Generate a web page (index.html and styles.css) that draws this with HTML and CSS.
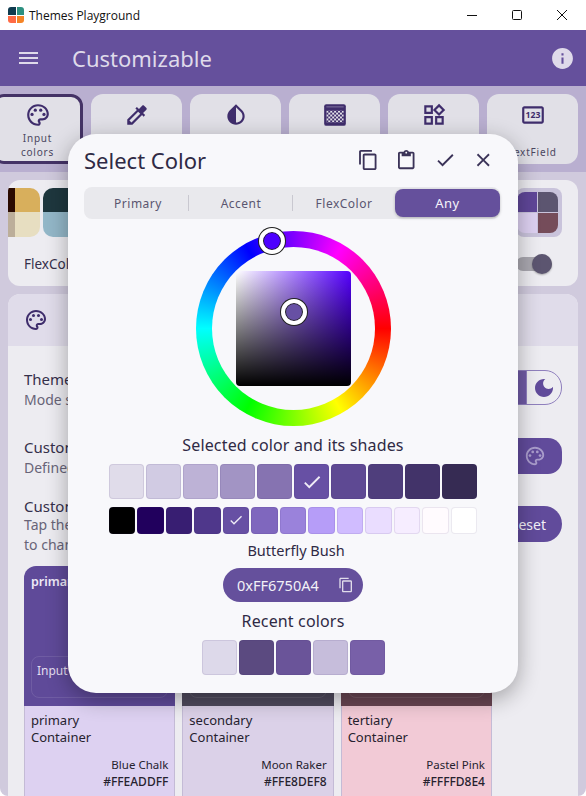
FILE: index.html
```html
<!DOCTYPE html>
<html lang="en">
<head>
    <meta charset="UTF-8">
    <meta name="viewport" content="width=device-width, initial-scale=1.0">
    <title>Themes Playground</title>
    <link rel="stylesheet" href="styles.css">
</head>
<body>
    <svg class="icon-defs" width="0" height="0">
        <symbol id="i-palette" viewBox="0 0 24 24">
            <path d="M12 22C6.49 22 2 17.51 2 12S6.49 2 12 2s10 4.04 10 9c0 3.31-2.69 6-6 6h-1.77c-.28 0-.5.22-.5.5 0 .12.05.23.13.33.41.47.64 1.06.64 1.67 0 1.38-1.12 2.5-2.5 2.5zm0-18c-4.41 0-8 3.59-8 8s3.59 8 8 8c.28 0 .5-.22.5-.5 0-.16-.08-.28-.14-.35-.41-.46-.63-1.05-.63-1.65 0-1.38 1.12-2.5 2.5-2.5H16c2.21 0 4-1.79 4-4 0-3.86-3.59-7-8-7z"/>
            <circle cx="6.5" cy="11.5" r="1.5"/><circle cx="9.5" cy="7.5" r="1.5"/><circle cx="14.5" cy="7.5" r="1.5"/><circle cx="17.5" cy="11.5" r="1.5"/>
        </symbol>
        <symbol id="i-copy" viewBox="0 0 24 24">
            <path d="M16 1H4c-1.1 0-2 .9-2 2v14h2V3h12V1zm3 4H8c-1.1 0-2 .9-2 2v14c0 1.1.9 2 2 2h11c1.1 0 2-.9 2-2V7c0-1.1-.9-2-2-2zm0 16H8V7h11v14z"/>
        </symbol>
        <symbol id="i-check" viewBox="0 0 24 24">
            <path d="M9 16.17L4.83 12l-1.42 1.41L9 19 21 7l-1.41-1.41z"/>
        </symbol>
    </svg>

    <div class="page">
        <div class="titlebar">
            <span class="app-logo"><i class="q1"></i><i class="q2"></i><i class="q3"></i><i class="q4"></i></span>
            <span class="app-name">Themes Playground</span>
            <div class="win-buttons">
                <svg width="12" height="12" viewBox="0 0 12 12"><path d="M1 6.5h10" stroke="#111" fill="none"/></svg>
                <svg width="12" height="12" viewBox="0 0 12 12"><rect x="1.5" y="1.5" width="9" height="9" rx="1" stroke="#111" fill="none"/></svg>
                <svg width="12" height="12" viewBox="0 0 12 12"><path d="M1 1l10 10M11 1L1 11" stroke="#111" fill="none"/></svg>
            </div>
        </div>

        <header class="appbar">
            <svg class="menu-icon" width="19" height="12" viewBox="0 0 19 12"><path d="M0 0h19v2H0zM0 5h19v2H0zM0 10h19v2H0z"/></svg>
            <h1>Customizable</h1>
            <svg class="info-icon" width="25" height="25" viewBox="0 0 24 24"><path d="M12 2C6.48 2 2 6.48 2 12s4.48 10 10 10 10-4.48 10-10S17.52 2 12 2zm1 15h-2v-6h2v6zm0-8h-2V7h2v2z"/></svg>
        </header>

        <nav class="tiles">
            <div class="tile tile-active">
                <svg class="tile-icon"><use href="#i-palette"/></svg>
                <span>Input<br>colors</span>
            </div>
            <div class="tile">
                <svg class="tile-icon" viewBox="0 0 24 24"><path d="M20.71 5.63l-2.34-2.34c-.39-.39-1.02-.39-1.41 0l-3.12 3.12-1.93-1.91-1.41 1.41 1.42 1.42L3 16.25V21h4.75l8.92-8.92 1.42 1.42 1.41-1.41-1.92-1.92 3.12-3.12c.4-.4.4-1.03.01-1.42zM6.92 19L5 17.08l8.06-8.06 1.92 1.92L6.92 19z"/></svg>
            </div>
            <div class="tile">
                <svg class="tile-icon" viewBox="0 0 24 24"><path transform="matrix(-1 0 0 1 24 0)" d="M12 4.81V19c-3.31 0-6-2.63-6-5.87 0-1.56.62-3.03 1.75-4.14L12 4.81M6.35 7.56C4.9 8.99 4 10.96 4 13.13 4 17.48 7.58 21 12 21s8-3.52 8-7.87c0-2.17-.9-4.14-2.35-5.57L12 2 6.35 7.56z"/></svg>
            </div>
            <div class="tile">
                <svg class="tile-icon" viewBox="0 0 24 24">
                    <defs><pattern id="dither" x="4" y="8" width="3.6" height="3.6" patternUnits="userSpaceOnUse"><rect width="3.6" height="3.6" fill="#3f2d6c"/><rect width="1.8" height="1.8" fill="#e1e0e7"/><rect x="1.8" y="1.8" width="1.8" height="1.8" fill="#e1e0e7"/></pattern></defs>
                    <rect x="2" y="2" width="20" height="20" rx="2"/>
                    <rect x="4" y="4" width="16" height="1" fill="#7b6d9c"/>
                    <rect x="4" y="8" width="16" height="10.8" fill="url(#dither)"/>
                </svg>
            </div>
            <div class="tile">
                <svg class="tile-icon" viewBox="0 0 24 24"><path d="M16.66 4.52l2.83 2.83-2.83 2.83-2.83-2.83 2.83-2.83M9 5v4H5V5h4m10 10v4h-4v-4h4M9 15v4H5v-4h4m7.66-13.31L11 7.34 16.66 13l5.66-5.66-5.66-5.65zM11 3H3v8h8V3zm10 10h-8v8h8v-8zm-10 0H3v8h8v-8z"/></svg>
            </div>
            <div class="tile">
                <svg class="tile-icon" viewBox="0 0 24 24">
                    <path d="M20 4H4c-1.1 0-2 .9-2 2v12c0 1.1.9 2 2 2h16c1.1 0 2-.9 2-2V6c0-1.1-.9-2-2-2zm0 14H4V6h16v12z"/>
                    <text x="12" y="15" class="pin-text">123</text>
                </svg>
                <span>TextField</span>
            </div>
        </nav>

        <main class="content">
            <section class="card schemes">
                <div class="swatch-row">
                    <div class="scheme scheme-gold"><i></i><i></i><i></i><i></i></div>
                    <div class="scheme scheme-teal"><i></i><i></i></div>
                    <div class="scheme-current"><div class="quad"><i></i><i></i><i></i><i></i></div></div>
                </div>
                <div class="scheme-foot">
                    <span>FlexColor scheme</span>
                    <span class="switch"><i></i></span>
                </div>
            </section>

            <section class="card panel">
                <div class="panel-head">
                    <svg class="panel-icon"><use href="#i-palette"/></svg>
                </div>
                <div class="panel-body">
                    <div class="row row-mode">
                        <div class="row-text">
                            <div class="row-title">Theme mode</div>
                            <div class="row-sub">Mode system</div>
                        </div>
                        <div class="mode-toggle">
                            <span class="mode-seg"></span>
                            <span class="mode-seg mode-on"></span>
                            <span class="mode-seg">
                                <svg width="24" height="24" viewBox="0 0 24 24"><path d="M12 3c-4.97 0-9 4.03-9 9s4.03 9 9 9 9-4.03 9-9c0-.46-.04-.92-.1-1.36-.98 1.37-2.58 2.26-4.4 2.26-2.98 0-5.4-2.42-5.4-5.4 0-1.81.89-3.42 2.26-4.4-.44-.06-.9-.1-1.36-.1z"/></svg>
                            </span>
                        </div>
                    </div>
                    <div class="row row-custom">
                        <div class="row-text">
                            <div class="row-title">Custom colors</div>
                            <div class="row-sub">Defined</div>
                        </div>
                        <div class="btn-palette">
                            <svg width="22" height="22"><use href="#i-palette"/></svg>
                        </div>
                    </div>
                    <div class="row row-reset">
                        <div class="row-text">
                            <div class="row-title">Custom input</div>
                            <div class="row-sub">Tap the colors<br>to change them</div>
                        </div>
                        <div class="btn-reset">Reset</div>
                    </div>

                    <div class="color-cards">
                        <div class="color-card cc-primary">
                            <div class="cc-top">
                                <div class="cc-name">primary</div>
                                <div class="cc-input">Input</div>
                            </div>
                            <div class="cc-bottom">
                                <div class="cc-label">primary<br>Container</div>
                                <div class="cc-code">Blue Chalk<br><b>#FFEADDFF</b></div>
                            </div>
                        </div>
                        <div class="color-card cc-secondary">
                            <div class="cc-top">
                                <div class="cc-input"></div>
                            </div>
                            <div class="cc-bottom">
                                <div class="cc-label">secondary<br>Container</div>
                                <div class="cc-code">Moon Raker<br><b>#FFE8DEF8</b></div>
                            </div>
                        </div>
                        <div class="color-card cc-tertiary">
                            <div class="cc-top">
                                <div class="cc-input"></div>
                            </div>
                            <div class="cc-bottom">
                                <div class="cc-label">tertiary<br>Container</div>
                                <div class="cc-code">Pastel Pink<br><b>#FFFFD8E4</b></div>
                            </div>
                        </div>
                    </div>
                </div>
            </section>
        </main>
    </div>

    <div class="dialog">
        <div class="dialog-head">
            <h2>Select Color</h2>
            <div class="dialog-actions">
                <svg width="24" height="24"><use href="#i-copy"/></svg>
                <svg width="24" height="24" viewBox="0 0 24 24"><path d="M19 3h-4.18C14.4 1.84 13.3 1 12 1c-1.3 0-2.4.84-2.82 2H5c-1.1 0-2 .9-2 2v15c0 1.1.9 2 2 2h14c1.1 0 2-.9 2-2V5c0-1.1-.9-2-2-2zm-7 0c.55 0 1 .45 1 1s-.45 1-1 1-1-.45-1-1 .45-1 1-1zm7 17H5V5h2v3h10V5h2v15z"/></svg>
                <svg width="24" height="24"><use href="#i-check"/></svg>
                <svg width="24" height="24" viewBox="0 0 24 24"><path d="M19 6.41L17.59 5 12 10.59 6.41 5 5 6.41 10.59 12 5 17.59 6.41 19 12 13.41 17.59 19 19 17.59 13.41 12z"/></svg>
            </div>
        </div>

        <div class="segments">
            <span class="seg seg-line">Primary</span>
            <span class="seg seg-line">Accent</span>
            <span class="seg">FlexColor</span>
            <span class="seg seg-on">Any</span>
        </div>

        <div class="wheel">
            <div class="wheel-hole"><div class="sv-box"></div></div>
            <span class="thumb thumb-hue"></span>
            <span class="thumb thumb-sv"></span>
        </div>

        <div class="caption">Selected color and its shades</div>
        <div class="shades">
            <span style="background:#e0dcea"></span>
            <span style="background:#d1cbe3"></span>
            <span style="background:#bdb2d6"></span>
            <span style="background:#a294c4"></span>
            <span style="background:#8673b1"></span>
            <span style="background:#6750a4"><svg width="22" height="22"><use href="#i-check"/></svg></span>
            <span style="background:#5e4993"></span>
            <span style="background:#4f3e7c"></span>
            <span style="background:#423369"></span>
            <span style="background:#362b53"></span>
        </div>
        <div class="tones">
            <span style="background:#000000"></span>
            <span style="background:#21005d"></span>
            <span style="background:#381e72"></span>
            <span style="background:#4f378b"></span>
            <span style="background:#6750a4"><svg width="16" height="16"><use href="#i-check"/></svg></span>
            <span style="background:#7f67be"></span>
            <span style="background:#9a82db"></span>
            <span style="background:#b69df8"></span>
            <span style="background:#d0bcff"></span>
            <span style="background:#eaddff"></span>
            <span style="background:#f6edff"></span>
            <span style="background:#fffbfe"></span>
            <span style="background:#ffffff"></span>
        </div>
        <div class="color-name">Butterfly Bush</div>
        <div class="hex-chip">
            <span>0xFF6750A4</span>
            <svg width="16" height="16"><use href="#i-copy"/></svg>
        </div>
        <div class="caption">Recent colors</div>
        <div class="shades">
            <span style="background:#ddd9ea"></span>
            <span style="background:#5b4a80"></span>
            <span style="background:#6a5499"></span>
            <span style="background:#c6bddb"></span>
            <span style="background:#7860a8"></span>
        </div>
    </div>
</body>
</html>
```

FILE: styles.css
```css
* {
    box-sizing: border-box;
}

body {
    margin: 0;
    width: 586px;
    height: 796px;
    overflow: hidden;
    position: relative;
    background-color: #fff;
    font-family: "Noto Sans", sans-serif;
    color: #2f2a45;
}

.icon-defs {
    position: absolute;
}

.page {
    height: 796px;
    display: flex;
    flex-direction: column;
    overflow: hidden;
    border-radius: 0 0 8px 8px;
}

/* window title */
.titlebar {
    height: 30px;
    flex: none;
    display: flex;
    align-items: center;
    padding-left: 8px;
    background-color: #fff;
}

.app-logo {
    width: 16px;
    height: 16px;
    display: grid;
    grid-template-columns: 1fr 1fr;
    grid-template-rows: 1fr 1fr;
    gap: 1px;
    border-radius: 3px;
    overflow: hidden;
}

.app-logo .q1 { background-color: #0f3b4f; }
.app-logo .q2 { background-color: #2d9080; }
.app-logo .q3 { background-color: #ff6a45; }
.app-logo .q4 { background-color: #f58426; }

.app-name {
    margin-left: 5px;
    font-family: "Open Sans", sans-serif;
    font-size: 12px;
    color: #111;
}

.win-buttons {
    margin-left: auto;
    display: flex;
    gap: 33px;
    padding-right: 18px;
}

/* app bar */
.appbar {
    height: 56px;
    flex: none;
    display: flex;
    align-items: center;
    padding: 0 11px 0 19px;
    background-color: #65509c;
}

.appbar h1 {
    margin: 0 0 0 34px;
    font-size: 22px;
    font-weight: 400;
    color: #dfdaea;
}

.menu-icon,
.info-icon {
    fill: #dfdaea;
}

.info-icon {
    margin-left: auto;
}

/* top tiles */
.tiles {
    height: 86px;
    flex: none;
    display: flex;
    gap: 8px;
    margin-left: -8px;
    padding-top: 8px;
    background-color: #b9afd0;
}

.tile {
    width: 91px;
    height: 70px;
    padding-top: 8px;
    flex: none;
    display: flex;
    flex-direction: column;
    align-items: center;
    background-color: #e1e0e7;
    border-radius: 12px;
    font-size: 10px;
    line-height: 14px;
    letter-spacing: 0.8px;
    text-align: center;
    color: #4b4760;
}

.tile span {
    margin-top: auto;
    padding-bottom: 5px;
}

.tile-active {
    border: 3px solid #443266;
    padding-top: 5px;
}

.tile-active span {
    padding-bottom: 2px;
}

.tile-icon {
    width: 26px;
    height: 26px;
    fill: #3f2d6c;
}

.pin-text {
    font-family: "Noto Sans", sans-serif;
    font-size: 8px;
    font-weight: 700;
    text-anchor: middle;
    letter-spacing: 0;
}

/* main area */
.content {
    flex: 1;
    min-height: 0;
    display: flex;
    flex-direction: column;
    gap: 8px;
    padding: 8px 8px 0;
    overflow: hidden;
    background-color: #d0cadd;
}

.card {
    background-color: #edecf1;
    border-radius: 12px;
    overflow: hidden;
}

.schemes {
    height: 106px;
    flex: none;
    padding-top: 8px;
}

.swatch-row {
    display: flex;
    height: 49px;
}

.scheme {
    display: grid;
    grid-template-rows: 24px 25px;
    overflow: hidden;
}

.scheme-gold {
    width: 32px;
    grid-template-columns: 7px 25px;
    border-radius: 0 10px 10px 0;
}

.scheme-gold i:nth-child(1) { background-color: #2a0a00; }
.scheme-gold i:nth-child(2) { background-color: #d8af5c; }
.scheme-gold i:nth-child(3) { background-color: #bcae9a; }
.scheme-gold i:nth-child(4) { background-color: #e7dec1; }

.scheme-teal {
    width: 40px;
    margin-left: 3px;
    border-radius: 10px;
}

.scheme-teal i:nth-child(1) { background-color: #1e373e; }
.scheme-teal i:nth-child(2) { background-color: #93b7c8; }

.scheme-current {
    width: 46px;
    margin-left: auto;
    margin-right: 16px;
    padding: 4px 4px 4px 1px;
    background-color: #c9c3db;
    border-radius: 8px;
}

.quad {
    height: 41px;
    display: grid;
    grid-template-columns: 1fr 1fr;
    grid-template-rows: 1fr 1fr;
    gap: 1px;
    border-radius: 8px;
    overflow: hidden;
}

.quad i:nth-child(1) { background-color: #5f4698; }
.quad i:nth-child(2) { background-color: #5c5570; }
.quad i:nth-child(3) { background-color: #ddd0f1; }
.quad i:nth-child(4) { background-color: #754c5a; }

.scheme-foot {
    display: flex;
    align-items: center;
    justify-content: space-between;
    margin-top: 18px;
    padding: 0 26px 0 16px;
    font-size: 13.5px;
    color: #35304b;
}

.switch {
    width: 36px;
    height: 14px;
    position: relative;
    border-radius: 7px;
    background-color: #a9a7af;
}

.switch i {
    position: absolute;
    right: 0;
    top: -3px;
    width: 20px;
    height: 20px;
    border-radius: 50%;
    background-color: #5c5570;
    box-shadow: 0 1px 2px rgba(0, 0, 0, 0.3);
}

.panel {
    flex: 1;
    min-height: 0;
    border-radius: 12px 12px 0 0;
}

.panel-head {
    height: 52px;
    display: flex;
    align-items: center;
    padding-left: 16px;
    background-color: #e0dcea;
}

.panel-icon {
    width: 24px;
    height: 24px;
    fill: #3f2d6c;
}

.panel-body {
    padding: 23px 16px 0;
}

.row {
    display: flex;
    justify-content: space-between;
    align-items: flex-start;
}

.row-custom {
    margin-top: 27px;
}

.row-reset {
    margin-top: 18px;
}

.row-title {
    font-size: 15px;
    line-height: 20px;
    white-space: nowrap;
    color: #35304b;
}

.row-sub {
    margin-top: 1px;
    font-size: 14px;
    line-height: 20px;
    white-space: nowrap;
    color: #686478;
}

.row-reset .row-sub {
    margin-top: -1px;
}

.mode-toggle {
    display: flex;
    height: 35px;
    margin-top: 1px;
    border: 1px solid #8f7fbd;
    border-radius: 17px;
    overflow: hidden;
}

.mode-seg {
    width: 35px;
    display: flex;
    align-items: center;
    justify-content: center;
    border-left: 1px solid #8f7fbd;
    fill: #614b9b;
}

.mode-on {
    background-color: #6f5aa5;
}

.btn-palette {
    width: 72px;
    height: 36px;
    margin-top: 1px;
    display: flex;
    align-items: center;
    justify-content: flex-end;
    padding-right: 16px;
    border-radius: 14px;
    fill: #a99ccb;
    background-color: #614b9b;
}

.btn-reset {
    width: 84px;
    height: 36px;
    margin-top: 10px;
    display: flex;
    align-items: center;
    justify-content: flex-end;
    padding-right: 16px;
    border-radius: 18px;
    font-size: 14px;
    color: #f2f0f7;
    background-color: #614b9b;
}

.color-cards {
    display: flex;
    gap: 7px;
    width: 468px;
    margin-top: 11px;
}

.color-card {
    flex: 1;
    height: 260px;
    border-radius: 12px 12px 0 0;
    overflow: hidden;
}

.cc-top {
    height: 140px;
    padding: 8px 7px;
    display: flex;
    flex-direction: column;
    justify-content: flex-end;
}

.cc-name {
    margin: -1px 0 auto;
    font-size: 12.5px;
    font-weight: 600;
    color: #eee9f7;
}

.cc-input {
    height: 42px;
    padding: 5px 5px;
    border: 1px solid rgba(255, 255, 255, 0.1);
    border-radius: 8px;
    font-size: 12px;
    color: #e4def0;
}

.cc-bottom {
    height: 120px;
    padding: 6px 6px 0;
    border: 1px solid #c4bbd6;
    border-top: none;
    color: #26222f;
}

.cc-label {
    font-size: 13px;
    line-height: 17px;
}

.cc-code {
    margin-top: 10px;
    font-size: 11.5px;
    line-height: 17px;
    text-align: right;
}

.cc-code b {
    font-size: 12px;
    font-weight: 500;
}

.cc-primary .cc-top { background-color: #5f4a99; }
.cc-primary .cc-bottom { background-color: #ddd1f1; }
.cc-secondary .cc-top { background-color: #4f4a5d; }
.cc-secondary .cc-bottom { background-color: #dbd1e8; }
.cc-tertiary .cc-top { background-color: #684552; }
.cc-tertiary .cc-bottom { background-color: #f2cad6; }

/* color picker dialog */
.dialog {
    position: absolute;
    left: 68px;
    top: 134px;
    width: 450px;
    height: 559px;
    padding: 0 16px;
    background-color: #f8f8fb;
    border-radius: 28px;
    box-shadow: 0 6px 22px rgba(0, 0, 0, 0.32);
}

.dialog-head {
    height: 53px;
    padding-bottom: 2px;
    display: flex;
    align-items: center;
    justify-content: space-between;
}

.dialog-head h2 {
    margin: 0;
    font-size: 22px;
    font-weight: 400;
    color: #2f2a45;
}

.dialog-actions {
    display: flex;
    margin-right: -0.5px;
    fill: #3b3358;
}

.dialog-actions svg {
    width: 38.5px;
    height: 22px;
}

.segments {
    width: 416px;
    height: 32px;
    display: grid;
    grid-template-columns: 105px 104px 102px 105px;
    background-color: #e9e9ed;
    border-radius: 8px;
}

.seg {
    position: relative;
    display: flex;
    align-items: center;
    justify-content: center;
    font-size: 12px;
    letter-spacing: 0.5px;
    color: #5a5670;
}

.seg:first-child {
    padding-left: 3px;
}

.seg-line::after {
    content: "";
    position: absolute;
    right: 0;
    top: 8px;
    height: 16px;
    border-right: 1px solid #c9c8d0;
}

.seg-on {
    margin: 2px 0;
    border-radius: 8px;
    font-size: 13px;
    color: #f6f4fb;
    background-color: #65509c;
    box-shadow: 0 1px 3px rgba(0, 0, 0, 0.25);
}

.wheel {
    width: 195px;
    height: 195px;
    margin: 12px auto 0;
    position: relative;
    display: flex;
    align-items: center;
    justify-content: center;
    border-radius: 50%;
    background: conic-gradient(from 90deg, #f00, #ff0, #0f0, #0ff, #00f, #f0f, #f00);
}

.wheel-hole {
    width: 163px;
    height: 163px;
    display: flex;
    align-items: center;
    justify-content: center;
    border-radius: 50%;
    background-color: #f8f8fb;
}

.sv-box {
    width: 115px;
    height: 115px;
    border-radius: 4px;
    background:
        linear-gradient(to top, #000, rgba(0, 0, 0, 0)),
        linear-gradient(to right, #fff, #5500ff);
}

.thumb {
    position: absolute;
    width: 26px;
    height: 26px;
    border: 4px solid #fff;
    border-radius: 50%;
    box-shadow: 0 0 0 1px #222, inset 0 0 0 1px #222;
}

.thumb-hue {
    left: 63px;
    top: -3px;
    background-color: #4d00ff;
}

.thumb-sv {
    left: 85px;
    top: 68px;
    background-color: #6750a4;
}

.caption {
    margin-top: 8px;
    font-size: 16px;
    line-height: 22px;
    letter-spacing: 0.15px;
    text-align: center;
    color: #2f2a45;
}

.shades,
.tones {
    display: flex;
    justify-content: center;
    gap: 2px;
    margin-top: 8px;
}

.shades span {
    width: 35px;
    height: 35px;
}

.tones span {
    width: 26.5px;
    height: 26.5px;
}

.shades span,
.tones span {
    display: flex;
    align-items: center;
    justify-content: center;
    border: 1px solid rgba(60, 40, 110, 0.1);
    border-radius: 4px;
    fill: #efecf6;
}

.color-name {
    margin-top: 6px;
    padding-left: 6px;
    font-size: 14.5px;
    line-height: 20px;
    text-align: center;
    color: #2f2a45;
}

.hex-chip {
    width: 140px;
    height: 34px;
    margin: 8px auto 0;
    display: flex;
    align-items: center;
    justify-content: space-between;
    padding: 0 9px 0 14px;
    border-radius: 17px;
    font-size: 14.5px;
    color: #f2f0f7;
    fill: #e0dcea;
    background-color: #65509c;
}
```
